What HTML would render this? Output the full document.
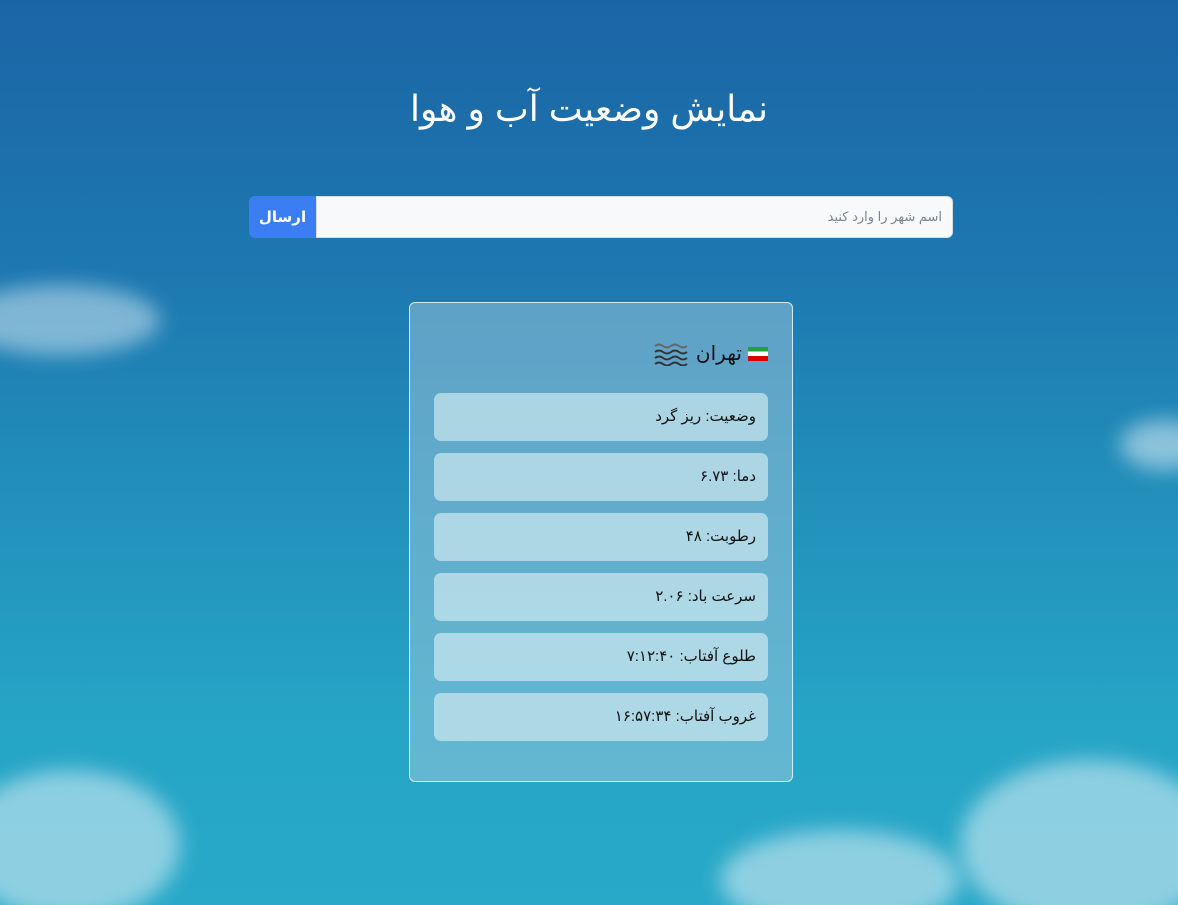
<!DOCTYPE html>
<html lang="fa" dir="rtl"><head><meta charset="utf-8">
<style>
*{box-sizing:border-box;margin:0;padding:0}
html{width:1178px;height:905px;overflow:hidden;background:#27a8c7}
body{width:1178px;height:905px;overflow:hidden;position:relative;font-family:"Liberation Sans","Noto Sans CJK SC","DejaVu Sans",sans-serif;
background:linear-gradient(180deg,#1b65a6 0%,#1d78b0 30%,#2290bb 55%,#26a5c6 80%,#28a9c8 100%);}
.cloud{position:absolute;border-radius:50%;filter:blur(10px)}
h1{position:absolute;top:88px;left:0;width:1178px;text-align:center;color:#fff;font-size:36px;font-weight:normal}
.form{position:absolute;left:249px;top:196px;width:704px;height:42px;display:flex;direction:ltr}
.btn{width:67px;height:42px;background:#3a7ef2;color:#fff;border-radius:6px 0 0 6px;font-size:15px;font-weight:bold;display:flex;align-items:center;justify-content:center}
.inp{flex:1;background:#f7f9fb;border:1px solid #d6dde3;border-radius:0 6px 6px 0;direction:rtl;font-size:13px;color:#7c848c;padding:12px 10px}
.card{position:absolute;left:409px;top:302px;width:384px;height:480px;border:1px solid rgba(255,255,255,.75);border-radius:6px;background:rgba(160,200,220,.5)}
.head{position:absolute;right:24px;top:38px;font-size:20px;color:#111;display:flex;align-items:center;gap:6px}
.row{position:absolute;left:24px;width:334px;height:48px;border-radius:7px;background:rgba(205,232,240,.7);font-size:15px;color:#111;padding:14px 12px;text-align:right}
</style></head><body>
<div class="cloud" style="left:-40px;top:285px;width:200px;height:70px;background:rgba(225,240,248,.5)"></div>
<div class="cloud" style="left:-40px;top:770px;width:220px;height:150px;background:rgba(225,240,248,.55)"></div>
<div class="cloud" style="left:720px;top:830px;width:240px;height:100px;background:rgba(225,240,248,.55)"></div>
<div class="cloud" style="left:960px;top:760px;width:260px;height:170px;background:rgba(225,240,248,.55)"></div>
<div class="cloud" style="left:1120px;top:420px;width:90px;height:50px;background:rgba(225,240,248,.55)"></div>
<h1>نمایش وضعیت آب و هوا</h1>
<div class="form"><div class="btn">ارسال</div><div class="inp">اسم شهر را وارد کنید</div></div>
<div class="card">
<div class="head"><span style="display:inline-block;width:20px;height:14px;background:linear-gradient(#239f40 0 33%,#fff 33% 66%,#da0000 66%)"></span><span>تهران</span>
<svg width="36" height="24" viewBox="0 0 36 24"><g fill="none" stroke="#333" stroke-width="2"><path d="M1 4q4-3 8 0t8 0t8 0t8 0" stroke="#666"/><path d="M1 10q4-3 8 0t8 0t8 0t8 0"/><path d="M1 16q4-3 8 0t8 0t8 0t8 0"/><path d="M1 22q4-3 8 0t8 0t8 0t8 0"/></g></svg></div>
<div class="row" style="top:90px">وضعیت: ریز گرد</div>
<div class="row" style="top:150px">دما: ۶.۷۳</div>
<div class="row" style="top:210px">رطوبت: ۴۸</div>
<div class="row" style="top:270px">سرعت باد: ۲.۰۶</div>
<div class="row" style="top:330px">طلوع آفتاب: ۷:۱۲:۴۰</div>
<div class="row" style="top:390px">غروب آفتاب: ۱۶:۵۷:۳۴</div>
</div>
</body></html>
